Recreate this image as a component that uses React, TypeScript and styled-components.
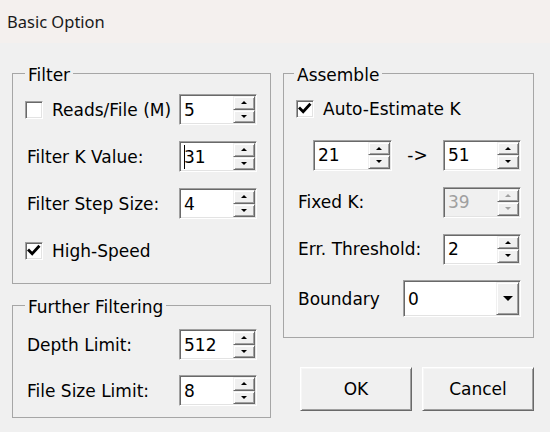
import React from 'react';
import styled, { createGlobalStyle } from 'styled-components';

const Global = createGlobalStyle`
  html, body { margin: 0; padding: 0; background: #f0f0f0; }
  body { width: 550px; height: 432px; overflow: hidden; font-family: "DejaVu Sans", sans-serif; color: #000; }
`;

const Window = styled.div`
  width: 550px;
  height: 432px;
  background: #f0f0f0;
  display: flex;
  flex-direction: column;
`;

const TitleBar = styled.div`
  height: 43px;
  flex: none;
  background: #f4f0ee;
  display: flex;
  align-items: center;
  padding-left: 7px;
  font-family: "Noto Sans", sans-serif;
  font-size: 16.5px;
  color: #1a1a1a;
`;

const Body = styled.div`
  display: flex;
  gap: 12px;
  padding: 18px 16px 0 12px;
`;

const Column = styled.div<{ $w: number; $gap: number }>`
  width: ${p => p.$w}px;
  display: flex;
  flex-direction: column;
  gap: ${p => p.$gap}px;
`;

const GroupBox = styled.fieldset<{ $pad: string; $gap: number }>`
  margin: 0;
  min-width: 0;
  border: 1px solid #a6a6a6;
  padding: ${p => p.$pad};
  display: flex;
  flex-direction: column;
  gap: ${p => p.$gap}px;
`;

const Legend = styled.legend<{ $shift?: number }>`
  padding: 4px 3px 0;
  margin-left: ${p => p.$shift ?? 0}px;
  font-size: 17px;
  line-height: 20px;
`;

const Row = styled.div<{ $h?: number; $indent?: number }>`
  display: flex;
  align-items: center;
  justify-content: space-between;
  height: ${p => p.$h ?? 31}px;
  padding-left: ${p => p.$indent ?? 0}px;
`;

const Label = styled.span`
  font-size: 17px;
  padding-left: 2px;
  white-space: nowrap;
`;

const CheckLine = styled.label`
  display: flex;
  align-items: center;
  gap: 9px;
  font-size: 17px;
  white-space: nowrap;
`;

const Sunken = styled.div`
  box-sizing: border-box;
  border: 1px solid;
  border-color: #a0a0a0 #ffffff #ffffff #a0a0a0;
  box-shadow: inset 1px 1px 0 #696969, inset -1px -1px 0 #e3e3e3;
  padding: 1px;
`;

const CheckFrame = styled(Sunken)`
  width: 18px;
  height: 18px;
  background: #fff;
  display: flex;
  align-items: center;
  justify-content: center;
  padding: 0;
`;

const SpinFrame = styled(Sunken)<{ $w: number; $h?: number; $disabled?: boolean }>`
  width: ${p => p.$w}px;
  height: ${p => p.$h ?? 31}px;
  display: flex;
  background: ${p => (p.$disabled ? '#f0f0f0' : '#ffffff')};
`;

const SpinValue = styled.div<{ $disabled?: boolean }>`
  flex: 1;
  display: flex;
  align-items: center;
  padding-left: 3px;
  font-size: 17px;
  color: ${p => (p.$disabled ? '#a0a0a0' : '#000')};
`;

const Caret = styled.span`
  width: 1px;
  height: 24px;
  background: #000;
  margin-right: -1px;
`;

const SpinButtons = styled.div`
  width: 22px;
  display: flex;
  flex-direction: column;
`;

const RaisedButton = styled.div`
  box-sizing: border-box;
  background: #f0f0f0;
  border: 1px solid;
  border-color: #f0f0f0 #696969 #696969 #f0f0f0;
  box-shadow: inset 1px 1px 0 #ffffff, inset -1px -1px 0 #a0a0a0;
  display: flex;
  align-items: center;
  justify-content: center;
`;

const SpinBtn = styled(RaisedButton)`
  flex: 1;
`;

const Arrow = styled.span<{ $dir: 'up' | 'down'; $size: number; $disabled?: boolean }>`
  width: 0;
  height: 0;
  border-left: ${p => p.$size}px solid transparent;
  border-right: ${p => p.$size}px solid transparent;
  ${p =>
    p.$dir === 'up'
      ? `border-bottom: ${Math.ceil(p.$size * 0.9)}px solid ${p.$disabled ? '#a0a0a0' : '#000'};`
      : `border-top: ${Math.ceil(p.$size * 0.9)}px solid ${p.$disabled ? '#a0a0a0' : '#000'};`}
`;

const DropBtn = styled(RaisedButton)`
  width: 23px;
`;

const RangeArrow = styled.span`
  flex: 1;
  text-align: center;
  font-size: 17px;
`;

const ButtonRow = styled.div`
  display: flex;
  justify-content: flex-end;
  gap: 10px;
  margin-top: 29px;
`;

const PushButton = styled.button`
  width: 112px;
  height: 44px;
  box-sizing: border-box;
  background: #f0f0f0;
  border: 1px solid;
  border-color: #ffffff #696969 #696969 #ffffff;
  box-shadow: inset 1px 1px 0 #f6f6f6, inset -1px -1px 0 #a0a0a0;
  font-family: "DejaVu Sans", sans-serif;
  font-size: 17px;
  color: #000;
  padding: 0;
`;

function SpinBox({ value, width = 78, disabled, caret }: { value: string; width?: number; disabled?: boolean; caret?: boolean }) {
  return (
    <SpinFrame $w={width} $disabled={disabled}>
      <SpinValue $disabled={disabled}>
        {caret && <Caret />}
        {value}
      </SpinValue>
      <SpinButtons>
        <SpinBtn>
          <Arrow $dir="up" $size={3} $disabled={disabled} />
        </SpinBtn>
        <SpinBtn>
          <Arrow $dir="down" $size={3} $disabled={disabled} />
        </SpinBtn>
      </SpinButtons>
    </SpinFrame>
  );
}

function Combo({ value, width }: { value: string; width: number }) {
  return (
    <SpinFrame $w={width} $h={37}>
      <SpinValue>{value}</SpinValue>
      <DropBtn>
        <Arrow $dir="down" $size={5} />
      </DropBtn>
    </SpinFrame>
  );
}

function CheckBox({ label, checked }: { label: string; checked?: boolean }) {
  return (
    <CheckLine>
      <CheckFrame>
        {checked && (
          <svg width="16" height="16" viewBox="0 0 16 16">
            <polyline points="3,7.5 6.2,10.8 12.5,3.8" fill="none" stroke="#000" strokeWidth="2.8" strokeLinecap="square" />
          </svg>
        )}
      </CheckFrame>
      {label}
    </CheckLine>
  );
}

export default function App() {
  return (
    <>
      <Global />
      <Window>
        <TitleBar>Basic Option</TitleBar>
        <Body>
          <Column $w={259} $gap={9}>
            <GroupBox $pad="9px 13px 17px 12px" $gap={16}>
              <Legend>Filter</Legend>
              <Row>
                <CheckBox label="Reads/File (M)" />
                <SpinBox value="5" />
              </Row>
              <Row>
                <Label>Filter K Value:</Label>
                <SpinBox value="31" caret />
              </Row>
              <Row>
                <Label>Filter Step Size:</Label>
                <SpinBox value="4" />
              </Row>
              <Row>
                <CheckBox label="High-Speed" checked />
              </Row>
            </GroupBox>
            <GroupBox $pad="12px 13px 11px 12px" $gap={15}>
              <Legend>Further Filtering</Legend>
              <Row>
                <Label>Depth Limit:</Label>
                <SpinBox value="512" />
              </Row>
              <Row>
                <Label>File Size Limit:</Label>
                <SpinBox value="8" />
              </Row>
            </GroupBox>
          </Column>
          <Column $w={251} $gap={0}>
            <GroupBox $pad="8px 12px 20px 12px" $gap={15}>
              <Legend $shift={-2}>Assemble</Legend>
              <Row>
                <CheckBox label="Auto-Estimate K" checked />
              </Row>
              <Row $h={32} $indent={17}>
                <SpinBox value="21" width={79} />
                <RangeArrow>-&gt;</RangeArrow>
                <SpinBox value="51" />
              </Row>
              <Row $h={32}>
                <Label>Fixed K:</Label>
                <SpinBox value="39" disabled />
              </Row>
              <Row $h={32}>
                <Label>Err. Threshold:</Label>
                <SpinBox value="2" />
              </Row>
              <Row $h={37}>
                <Label>Boundary</Label>
                <Combo value="0" width={118} />
              </Row>
            </GroupBox>
            <ButtonRow>
              <PushButton>OK</PushButton>
              <PushButton>Cancel</PushButton>
            </ButtonRow>
          </Column>
        </Body>
      </Window>
    </>
  );
}
